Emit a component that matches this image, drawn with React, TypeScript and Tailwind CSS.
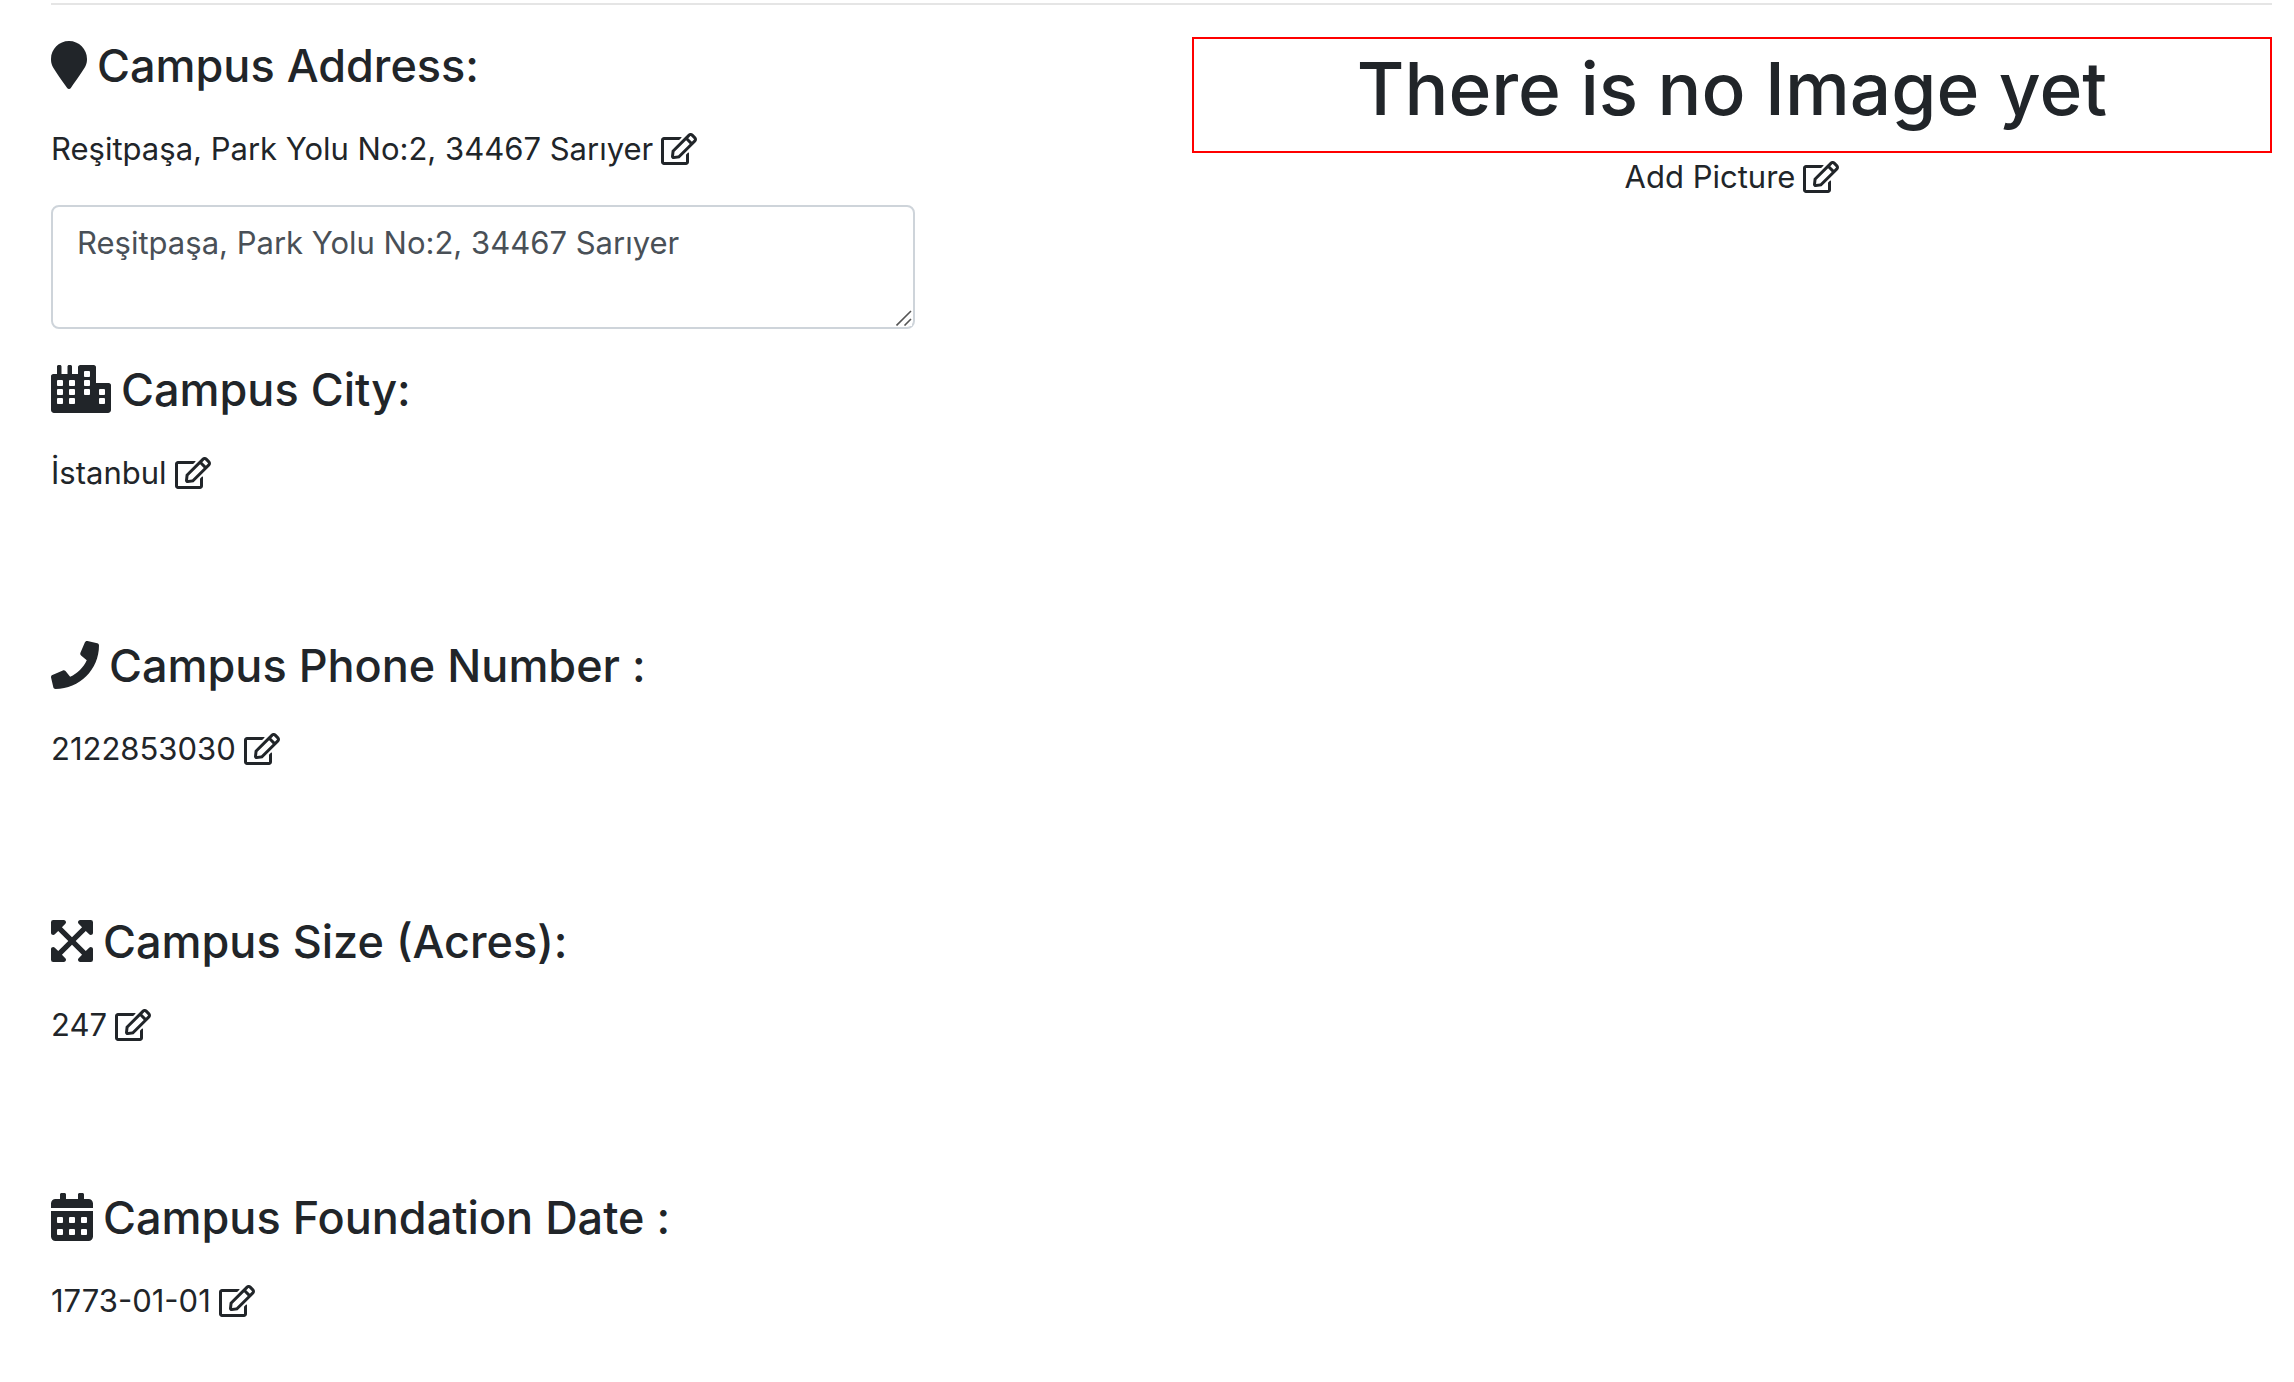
import type { ReactNode } from "react";
import type { IconType } from "react-icons";
import {
  FaCalendarAlt,
  FaCity,
  FaExpandArrowsAlt,
  FaMapMarker,
  FaPhone,
  FaRegEdit,
} from "react-icons/fa";

type FieldProps = {
  title: string;
  value: string;
  icon: IconType;
  iconWidth: string;
  children?: ReactNode;
};

function EditButton({ label }: { label: string }) {
  return (
    <button type="button" aria-label={label} className="cursor-pointer">
      <FaRegEdit className="h-8 w-9" />
    </button>
  );
}

function Field({ title, value, icon: Icon, iconWidth, children }: FieldProps) {
  return (
    <section>
      <h4 className="mb-[30px] flex items-start gap-2.5 text-[45px] leading-[58px] font-medium">
        <Icon className={`mt-1 h-12 shrink-0 ${iconWidth}`} />
        {title}
      </h4>
      <p className="flex items-center gap-2">
        {value}
        <EditButton label={`Edit ${title}`} />
      </p>
      {children ?? <div className="h-[140px]" />}
    </section>
  );
}

export default function App() {
  return (
    <main className="min-h-screen bg-white pt-[3px] pr-[22px] pl-[51px] font-['Inter','Liberation_Sans',sans-serif] text-[31px] leading-[48px] text-[#212529]">
      <hr className="mb-8 border-t-2 border-[#e5e5e5]" />
      <div className="grid grid-cols-2 gap-[61px]">
        <div>
          <Field
            title="Campus Address:"
            value="Reşitpaşa, Park Yolu No:2, 34467 Sarıyer"
            icon={FaMapMarker}
            iconWidth="w-9"
          >
            <div className="relative my-8 w-4/5">
              <textarea
                rows={2}
                aria-label="Campus Address"
                defaultValue="Reşitpaşa, Park Yolu No:2, 34467 Sarıyer"
                className="block w-full resize-y rounded-lg border-2 border-[#ced4da] bg-white px-6 py-3 text-[#495057]"
              />
              <svg
                viewBox="0 0 16 16"
                aria-hidden="true"
                className="pointer-events-none absolute right-[3px] bottom-[3px] size-4 bg-white"
              >
                <path d="M0.5 15.5L15 1M8.5 15.5L15 9" stroke="#555555" strokeWidth="1.6" />
              </svg>
            </div>
          </Field>
          <Field title="Campus City:" value="İstanbul" icon={FaCity} iconWidth="w-[60px]" />
          <Field title="Campus Phone Number :" value="2122853030" icon={FaPhone} iconWidth="w-12" />
          <Field title="Campus Size (Acres):" value="247" icon={FaExpandArrowsAlt} iconWidth="w-[42px]" />
          <Field title="Campus Foundation Date :" value="1773-01-01" icon={FaCalendarAlt} iconWidth="w-[42px]">
            <></>
          </Field>
        </div>
        <div>
          <div className="border-2 border-[#ff0000] pb-3">
            <h1 className="text-center text-[73px] leading-[100px] font-medium">There is no Image yet</h1>
          </div>
          <p className="flex items-center justify-center gap-2">
            Add Picture
            <EditButton label="Add Picture" />
          </p>
        </div>
      </div>
    </main>
  );
}
